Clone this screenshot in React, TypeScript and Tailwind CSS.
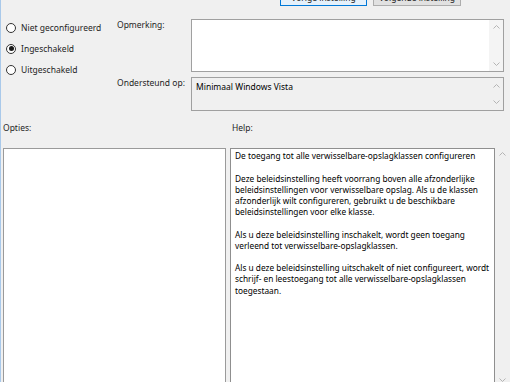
import React from "react";

function Chevron({ up }: { up?: boolean }) {
  return (
    <svg width="7" height="4" viewBox="0 0 7 4" className="block">
      <polyline
        points={up ? "0.5,3.5 3.5,0.5 6.5,3.5" : "0.5,0.5 3.5,3.5 6.5,0.5"}
        fill="none"
        stroke="#b4b4b4"
        strokeWidth="1"
      />
    </svg>
  );
}

function Radio({ checked, label }: { checked?: boolean; label: string }) {
  return (
    <div className="flex items-center h-[17px] gap-[5px]">
      <div className="w-[10px] h-[10px] rounded-full border border-[#333] bg-white flex items-center justify-center">
        {checked && <div className="w-[5px] h-[5px] rounded-full bg-[#1a1a1a]" />}
      </div>
      <span>{label}</span>
    </div>
  );
}

export default function App() {
  return (
    <div className="w-[510px] h-[382px] overflow-hidden bg-[#f0f0f0] border-l border-[#a9c9ea] font-['Noto_Sans',sans-serif] text-[8.5px] leading-[11.2px] text-[#1e1e1e]">
      {/* buttons (cut off at top) */}
      <div className="flex gap-[6px] pl-[279px] mt-[-10px] h-[16px]">
        <div className="w-[87px] h-[16px] border border-[#0078d7] bg-[#e5f1fb] flex items-center justify-center">
          Vorige instelling
        </div>
        <div className="w-[88px] h-[16px] border border-[#adadad] bg-[#e1e1e1] flex items-center justify-center">
          Volgende instelling
        </div>
      </div>

      {/* top section */}
      <div className="flex mt-[13px]">
        <div className="w-[116px] flex flex-col gap-[4px] pl-[5px]">
          <Radio label="Niet geconfigureerd" />
          <Radio checked label="Ingeschakeld" />
          <Radio label="Uitgeschakeld" />
        </div>
        <div className="flex-1 pr-[6px] flex flex-col gap-[5px]">
          <div className="flex">
            <div className="w-[74px]">Opmerking:</div>
            <div className="flex-1 h-[53px] border border-[#a0a0a0] bg-white flex">
              <div className="flex-1" />
              <div className="w-[14px] bg-[#f4f4f4] flex flex-col items-center justify-between py-[5px]">
                <Chevron up />
                <Chevron />
              </div>
            </div>
          </div>
          <div className="flex">
            <div className="w-[74px]">Ondersteund op:</div>
            <div className="flex-1 h-[34px] border border-[#a0a0a0] bg-[#f0f0f0] flex">
              <div className="flex-1 pl-[4px] pt-[3px] text-black">Minimaal Windows Vista</div>
              <div className="w-[14px] flex flex-col items-center justify-between py-[6px]">
                <Chevron up />
                <Chevron />
              </div>
            </div>
          </div>
        </div>
      </div>

      {/* labels */}
      <div className="flex mt-[11px]">
        <div className="w-[231px] pl-[2px]">Opties:</div>
        <div>Help:</div>
      </div>

      {/* bottom boxes */}
      <div className="flex mt-[15px] pl-[2px]">
        <div className="w-[223px] h-[260px] border border-[#9a9a9a] bg-white" />
        <div className="w-[4px]" />
        <div className="w-[265px] h-[260px] border border-[#8f8f8f] bg-white pl-[4px] pt-[1px] text-black whitespace-nowrap text-[8.3px]">
          <div>De toegang tot alle verwisselbare-opslagklassen configureren</div>
          <div className="h-[11.2px]" />
          <div>Deze beleidsinstelling heeft voorrang boven alle afzonderlijke</div>
          <div>beleidsinstellingen voor verwisselbare opslag. Als u de klassen</div>
          <div>afzonderlijk wilt configureren, gebruikt u de beschikbare</div>
          <div>beleidsinstellingen voor elke klasse.</div>
          <div className="h-[11.2px]" />
          <div>Als u deze beleidsinstelling inschakelt, wordt geen toegang</div>
          <div>verleend tot verwisselbare-opslagklassen.</div>
          <div className="h-[11.2px]" />
          <div>Als u deze beleidsinstelling uitschakelt of niet configureert, wordt</div>
          <div>schrijf- en leestoegang tot alle verwisselbare-opslagklassen</div>
          <div>toegestaan.</div>
        </div>
        <div className="w-[15px] h-[234px] flex flex-col items-center justify-between pt-[4px]">
          <Chevron up />
          <Chevron />
        </div>
      </div>
    </div>
  );
}
